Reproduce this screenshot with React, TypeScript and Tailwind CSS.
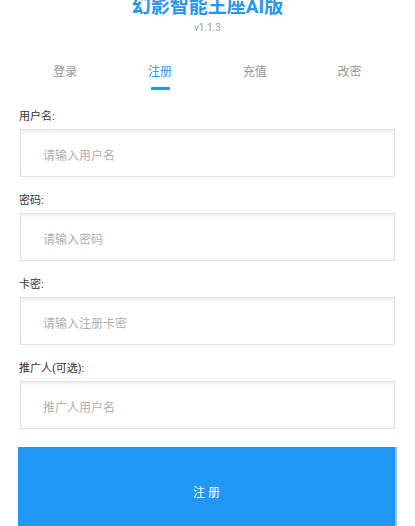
import React from "react";

const tabs = ["登录", "注册", "充值", "改密"];

const fields = [
  { label: "用户名:", placeholder: "请输入用户名", type: "text" },
  { label: "密码:", placeholder: "请输入密码", type: "password" },
  { label: "卡密:", placeholder: "请输入注册卡密", type: "text" },
  { label: "推广人(可选):", placeholder: "推广人用户名", type: "text" },
];

export default function App() {
  return (
    <div
      className="min-h-[526px] overflow-hidden bg-white px-[18px]"
      style={{ fontFamily: 'Roboto, "Noto Sans CJK SC", sans-serif' }}
    >
      {/* 标题 */}
      <div className="mt-[-5px] flex flex-col items-center">
        <h1 className="text-[19px] font-bold leading-[24px] text-[#2196f3]">
          幻影智能王座AI版
        </h1>
        <p className="mt-[2px] text-[10px] leading-[14px] text-[#9e9e9e]">v1.1.3</p>
      </div>

      {/* 选项卡 */}
      <div className="mt-[29px] mb-[15px] grid grid-cols-4">
        {tabs.map((tab, i) => (
          <div key={tab} className="flex flex-col items-center">
            <span
              className={
                i === 1
                  ? "text-[12px] leading-[17px] text-[#2196f3]"
                  : "text-[12px] leading-[17px] text-[#999999]"
              }
            >
              {tab}
            </span>
            <span
              className={
                i === 1
                  ? "mt-[6px] h-[3px] w-[19px] rounded-[1px] bg-[#2196f3]"
                  : "mt-[6px] h-[3px] w-[19px]"
              }
            />
          </div>
        ))}
      </div>

      {/* 表单 */}
      <form className="flex flex-col" onSubmit={(e) => e.preventDefault()}>
        {fields.map((f) => (
          <div key={f.label} className="mb-[12px]">
            <label className="flex h-[24px] items-center pl-[1px] text-[11px] text-[#333333]">
              {f.label}
            </label>
            <input
              type={f.type}
              placeholder={f.placeholder}
              className="mx-[2px] block h-[48px] w-[calc(100%-4px)] border border-[#e2e2e2] bg-white px-[22px] pt-[5px] text-[12px] text-[#333333] shadow-[inset_0_2px_3px_rgba(0,0,0,0.07)] outline-none placeholder:text-[#b0b0b0]"
            />
          </div>
        ))}

        <button
          type="submit"
          className="mt-[6px] flex h-[92px] w-full items-center justify-center border-r-2 border-[#8cc8f8] bg-[#2196f3] text-[12px] text-white"
        >
          注 册
        </button>
      </form>
    </div>
  );
}
